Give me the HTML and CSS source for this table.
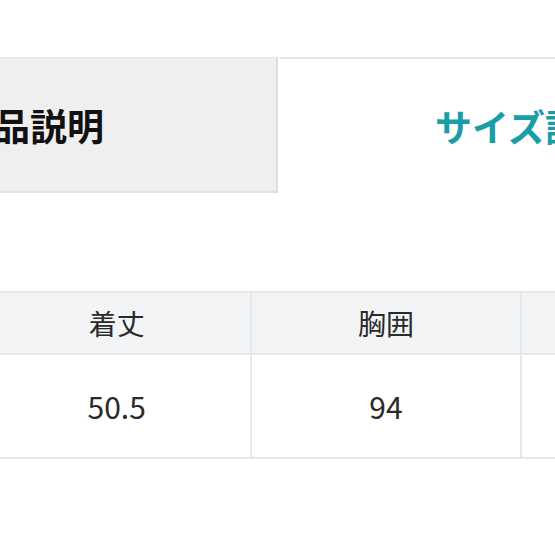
FILE: index.html
```html
<!DOCTYPE html>
<html lang="ja">
<head>
<meta charset="utf-8">
<link rel="stylesheet" href="styles.css">
</head>
<body>
<div class="page">
  <div class="tabs">
    <div class="tab tab-inactive">商品説明</div>
    <div class="tab tab-active">サイズ詳細</div>
  </div>
  <table class="size-table">
    <thead>
      <tr><th>着丈</th><th>胸囲</th><th>肩幅</th></tr>
    </thead>
    <tbody>
      <tr><td>50.5</td><td>94</td><td>42</td></tr>
    </tbody>
  </table>
</div>
</body>
</html>
```
FILE: styles.css
```css
html, body {
  margin: 0;
  padding: 0;
  background: #ffffff;
}
.page {
  width: 555px;
  height: 555px;
  overflow: hidden;
  font-family: "Noto Sans CJK JP", "Noto Sans", sans-serif;
  color: #222;
}
.tabs {
  display: flex;
  margin-left: -216px;
  padding-top: 57px;
  width: 1100px;
}
.tab {
  flex: none;
  box-sizing: border-box;
  width: 494px;
  height: 136px;
  display: flex;
  align-items: center;
  justify-content: center;
  font-size: 37px;
  font-weight: 700;
  border-top: 1px solid #e3e3e3;
}
.tab-inactive {
  background: #efefef;
  color: #111;
  border-right: 2px solid #dedede;
  border-bottom: 2px solid #e2e2e2;
}
.tab-active {
  margin-left: 2px;
  color: #1a9da6;
  background: #fff;
  border-top-width: 2px;
  border-top-color: #e6e6e6;
}
.size-table {
  margin-top: 98px;
  margin-left: -19px;
  width: 810px;
  border-collapse: collapse;
  table-layout: fixed;
}
.size-table th,
.size-table td {
  border: 2px solid #e5e8eb;
  text-align: center;
  padding: 0;
  color: #2a2a2a;
}
.size-table th {
  height: 60px;
  background: #f2f4f6;
  font-size: 28px;
  font-weight: 400;
}
.size-table td {
  height: 102px;
  font-size: 30px;
  font-weight: 400;
  background: #fff;
}
```
